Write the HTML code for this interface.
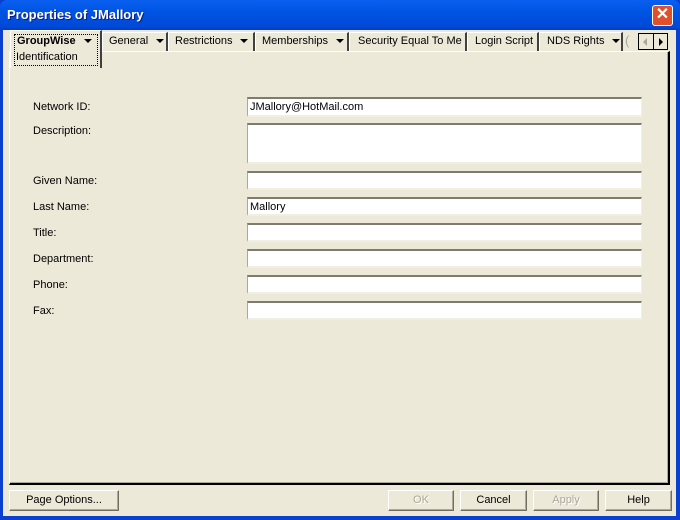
<!DOCTYPE html>
<html><head><style>
*{margin:0;padding:0;box-sizing:border-box}
body{width:680px;height:520px;overflow:hidden;background:#0a3fd0;font-family:"Liberation Sans",sans-serif;font-size:11px;color:#000;position:relative}
.title{position:absolute;left:0;top:0;width:680px;height:30px;background:linear-gradient(#0a5ff0,#0054e3 40%,#0048d8 90%,#003cc0);border-radius:7px 7px 0 0}
.title span{position:absolute;left:7px;top:7px;color:#fff;font-weight:bold;font-size:13px;text-shadow:1px 1px #0a1e80}
.close{position:absolute;left:652px;top:5px;width:21px;height:21px;background:#e0502a;border:1px solid #fff;border-radius:3px;color:#fff;font-weight:bold;font-size:16px;line-height:18px;text-align:center}
.win{position:absolute;left:3px;top:30px;width:673px;height:486px;background:#ece9d8}
.a{position:absolute}
.panel{position:absolute;left:9px;top:51px;width:661px;height:434px;border-left:1px solid #fff;border-top:1px solid #fff;border-right:2px solid #000;border-bottom:2px solid #000;box-shadow:inset -1px -1px #aca899}
.tab{position:absolute;top:32px;height:19px;border-left:1px solid #fff;border-top:1px solid #fff;border-right:2px solid #404040;font-size:11px;line-height:17px;padding-left:6px;white-space:nowrap}
.arr{display:inline-block;width:0;height:0;border-left:4px solid transparent;border-right:4px solid transparent;border-top:4px solid #000;vertical-align:middle;margin-left:8px}
.sel{position:absolute;left:10px;top:30px;width:92px;height:38px;background:#ece9d8;border-left:1px solid #fff;border-top:1px solid #fff;border-right:2px solid #404040}
.sel .in{position:absolute;left:3px;top:3px;right:2px;bottom:2px;border:1px dotted #000}
.lbl{position:absolute;left:33px}
.f{position:absolute;left:247px;width:395px;background:#fff;border-top:2px solid #7f7b70;border-left:1px solid #aca899;border-right:1px solid #f1efe2;border-bottom:2px solid #f1efe2;padding:2px 2px;font-size:11px}
.btn{position:absolute;top:490px;height:21px;border:1px solid;border-color:#fff #716f64 #716f64 #fff;box-shadow:inset -1px -1px #aca899;text-align:center;line-height:19px;font-size:11px}
.dis{color:#aca899;text-shadow:1px 1px #fff}
</style></head><body>
<div class="title"><span>Properties of JMallory</span><div class="close">✕</div></div>
<div class="win"></div>
<div class="panel"></div>
<div class="sel"><div class="in"></div></div>
<div class="a" style="left:17px;top:35px;font-weight:bold">GroupWise<span class="arr"></span></div>
<div class="a" style="left:16px;top:51px">Identification</div>
<div class="tab" style="left:102px;width:66px">General<span class="arr"></span></div>
<div class="tab" style="left:168px;width:87px">Restrictions<span class="arr"></span></div>
<div class="tab" style="left:255px;width:94px">Memberships<span class="arr"></span></div>
<div class="tab" style="left:349px;width:118px;padding-left:8px">Security Equal To Me</div>
<div class="tab" style="left:467px;width:72px;padding-left:7px">Login Script</div>
<div class="tab" style="left:539px;width:84px;padding-left:7px">NDS Rights<span class="arr"></span></div>
<div class="a" style="left:625px;top:33px;color:#aca899;font-size:13px">(</div>
<div class="a" style="left:638px;top:33px;width:15px;height:17px;border:1px solid #000;border-right:none;background:#ece9d8"><div style="position:absolute;left:4px;top:4px;border-top:4px solid transparent;border-bottom:4px solid transparent;border-right:4px solid #aca899"></div></div>
<div class="a" style="left:653px;top:33px;width:15px;height:17px;border:1px solid #000;background:#ece9d8"><div style="position:absolute;left:5px;top:4px;border-top:4px solid transparent;border-bottom:4px solid transparent;border-left:4px solid #000"></div></div>

<div class="lbl" style="top:101px">Network ID:</div>
<div class="lbl" style="top:125px">Description:</div>
<div class="lbl" style="top:175px">Given Name:</div>
<div class="lbl" style="top:201px">Last Name:</div>
<div class="lbl" style="top:227px">Title:</div>
<div class="lbl" style="top:253px">Department:</div>
<div class="lbl" style="top:279px">Phone:</div>
<div class="lbl" style="top:305px">Fax:</div>

<div class="f" style="top:97px;height:20px">JMallory@HotMail.com</div>
<div class="f" style="top:123px;height:41px"></div>
<div class="f" style="top:171px;height:19px"></div>
<div class="f" style="top:197px;height:19px">Mallory</div>
<div class="f" style="top:223px;height:19px"></div>
<div class="f" style="top:249px;height:19px"></div>
<div class="f" style="top:275px;height:19px"></div>
<div class="f" style="top:301px;height:19px"></div>

<div class="btn" style="left:9px;width:110px">Page Options...</div>
<div class="btn dis" style="left:388px;width:66px">OK</div>
<div class="btn" style="left:460px;width:67px">Cancel</div>
<div class="btn dis" style="left:533px;width:66px">Apply</div>
<div class="btn" style="left:605px;width:67px">Help</div>
</body></html>
